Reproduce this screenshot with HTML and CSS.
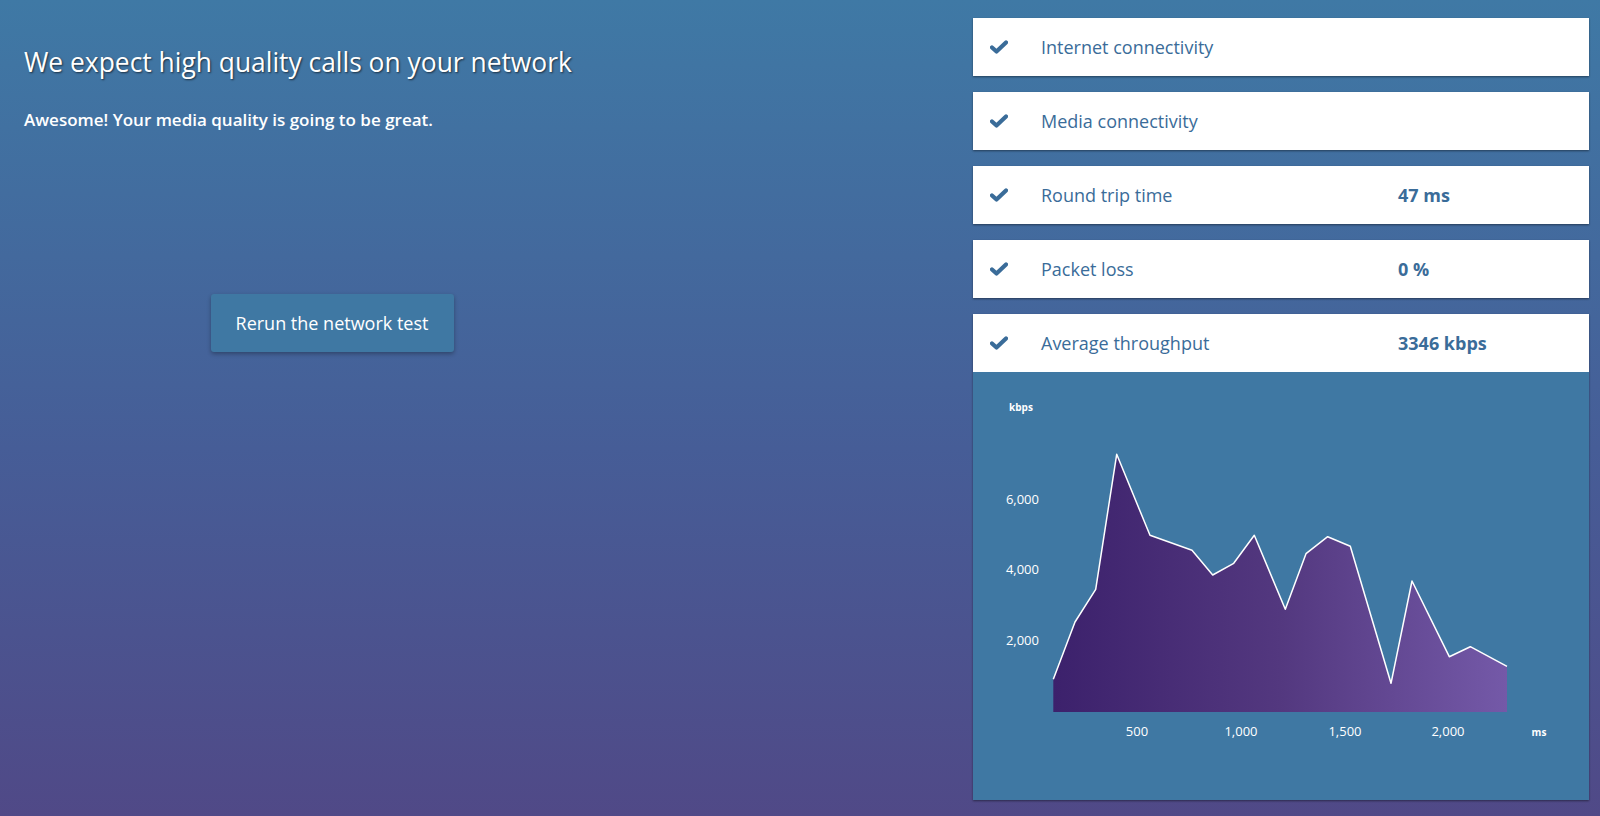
FILE: index.html
```html
<!DOCTYPE html>
<html lang="en">
<head>
  <meta charset="UTF-8">
  <meta name="viewport" content="width=device-width, initial-scale=1.0">
  <title>Network test</title>
  <link rel="stylesheet" href="styles.css">
</head>
<body>
  <div class="page">
    <div class="summary">
      <h1>We expect high quality calls on your network</h1>
      <p class="lead">Awesome! Your media quality is going to be great.</p>
      <button class="rerun">Rerun the network test</button>
    </div>

    <div class="results">
      <div class="card">
        <svg class="check" width="18" height="14" viewBox="0 0 18 14"><polyline points="2,7.5 6.5,11.5 16,2.5" /></svg>
        <span class="label">Internet connectivity</span>
        <span class="value"></span>
      </div>
      <div class="card">
        <svg class="check" width="18" height="14" viewBox="0 0 18 14"><polyline points="2,7.5 6.5,11.5 16,2.5" /></svg>
        <span class="label">Media connectivity</span>
        <span class="value"></span>
      </div>
      <div class="card">
        <svg class="check" width="18" height="14" viewBox="0 0 18 14"><polyline points="2,7.5 6.5,11.5 16,2.5" /></svg>
        <span class="label">Round trip time</span>
        <span class="value">47 ms</span>
      </div>
      <div class="card">
        <svg class="check" width="18" height="14" viewBox="0 0 18 14"><polyline points="2,7.5 6.5,11.5 16,2.5" /></svg>
        <span class="label">Packet loss</span>
        <span class="value">0 %</span>
      </div>
      <div class="card card-open">
        <div class="card-head">
          <svg class="check" width="18" height="14" viewBox="0 0 18 14"><polyline points="2,7.5 6.5,11.5 16,2.5" /></svg>
          <span class="label">Average throughput</span>
          <span class="value">3346 kbps</span>
        </div>
        <div class="chart">
          <svg width="616" height="428" viewBox="0 0 616 428">
            <defs>
              <linearGradient id="area" x1="80" y1="0" x2="534" y2="0" gradientUnits="userSpaceOnUse">
                <stop offset="0" stop-color="#3c216c"/>
                <stop offset="0.5" stop-color="#53387f"/>
                <stop offset="1" stop-color="#7459a8"/>
              </linearGradient>
            </defs>
            <text class="unit" x="48" y="36">kbps</text>
            <text class="tick-y" x="66" y="129">6,000</text>
            <text class="tick-y" x="66" y="199">4,000</text>
            <text class="tick-y" x="66" y="270">2,000</text>

            <path fill="url(#area)" d="M80.3 340 L80.3 307.3 L102 250 L122.7 217.3 L143.7 82.3 L177 163.3 L219 178.3 L239.7 203 L260.7 191.3 L281.3 163.3 L312.3 237.3 L333 181.7 L354.7 164.7 L377.3 174.3 L418 311.3 L439 209 L476.3 284.7 L497.3 274.7 L534 294.3 L534 340 Z"/>
            <polyline class="line" points="80.3,307.3 102,250 122.7,217.3 143.7,82.3 177,163.3 219,178.3 239.7,203 260.7,191.3 281.3,163.3 312.3,237.3 333,181.7 354.7,164.7 377.3,174.3 418,311.3 439,209 476.3,284.7 497.3,274.7 534,294.3"/>

            <text class="tick-x" x="164" y="361">500</text>
            <text class="tick-x" x="268" y="361">1,000</text>
            <text class="tick-x" x="372" y="361">1,500</text>
            <text class="tick-x" x="475" y="361">2,000</text>
            <text class="unit" x="566" y="361">ms</text>
          </svg>
        </div>
      </div>
    </div>
  </div>
</body>
</html>
```

FILE: styles.css
```css
* {
  box-sizing: border-box;
}

html, body {
  margin: 0;
  min-height: 100%;
}

body {
  font-family: 'Open Sans', 'Liberation Sans', sans-serif;
  min-height: 100vh;
  background: linear-gradient(to bottom, #3f79a5 0%, #465d97 55%, #504987 100%);
  color: #fff;
}

.page {
  display: flex;
  padding: 18px 11px 0 24px;
}

/* left side */
.summary {
  flex: 0 0 616px;
  display: flex;
  flex-direction: column;
  align-items: flex-start;
  padding-top: 26px;
}

h1 {
  font-size: 26.4px;
  font-weight: 400;
  line-height: 36px;
  margin: 0;
  text-shadow: 1px 1px 2px rgba(0, 0, 0, 0.6);
}

.lead {
  font-size: 17px;
  font-weight: 600;
  line-height: 22px;
  margin: 29px 0 0;
}

.rerun {
  align-self: center;
  margin-top: 163px;
  width: 243px;
  height: 58px;
  border: none;
  border-radius: 3px;
  background: #3f78a3;
  color: #fff;
  font-family: inherit;
  font-size: 18px;
  box-shadow: 0 2px 4px rgba(0, 0, 0, 0.3);
  cursor: pointer;
}

/* right side */
.results {
  margin-left: auto;
  width: 616px;
  display: flex;
  flex-direction: column;
  gap: 16px;
}

.card,
.card-head {
  display: grid;
  grid-template-columns: 51px 357px auto;
  align-items: center;
  height: 58px;
  padding-left: 17px;
  background: #fff;
  color: #3a6c99;
  font-size: 18px;
}

.card {
  box-shadow: 0 1px 2px rgba(0, 0, 0, 0.45);
}

.card-open {
  display: block;
  height: auto;
  padding: 0;
}

.check polyline {
  fill: none;
  stroke: #3a6c99;
  stroke-width: 4.2;
  stroke-linejoin: round;
  stroke-linecap: round;
}

.value {
  font-weight: 700;
}

.chart {
  height: 428px;
  background: #3f78a3;
}

.chart svg {
  display: block;
  font-family: 'Open Sans', 'Liberation Sans', sans-serif;
}

.chart text {
  fill: #fff;
  dominant-baseline: middle;
}

.tick-y {
  font-size: 13px;
  text-anchor: end;
}

.tick-x {
  font-size: 13px;
  text-anchor: middle;
}

.unit {
  font-size: 10px;
  font-weight: 700;
  text-anchor: middle;
}

.line {
  fill: none;
  stroke: #fff;
  stroke-width: 1.5;
  stroke-linejoin: round;
}
```
